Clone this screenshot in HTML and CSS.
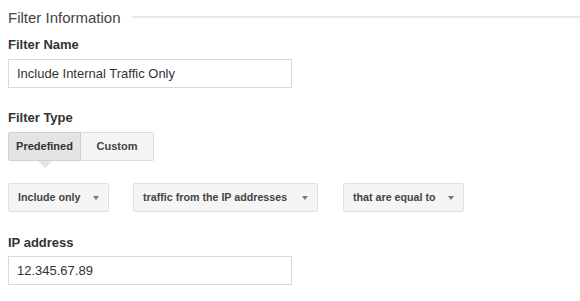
FILE: index.html
```html
<!DOCTYPE html>
<html>
<head>
<meta charset="utf-8">
<link rel="stylesheet" href="styles.css">
</head>
<body>
<div class="page">
  <div class="section-head">
    <span class="section-title">Filter Information</span>
    <span class="section-rule"></span>
  </div>
  <div class="label label-name">Filter Name</div>
  <div class="input">Include Internal Traffic Only</div>

  <div class="label label-type">Filter Type</div>
  <div class="toggle">
    <div class="toggle-btn active">Predefined<span class="caret"></span></div>
    <div class="toggle-btn">Custom</div>
  </div>

  <div class="selects">
    <div class="select s1">Include only<span class="arrow"></span></div>
    <div class="select s2">traffic from the IP addresses<span class="arrow"></span></div>
    <div class="select s3">that are equal to<span class="arrow"></span></div>
  </div>

  <div class="label label-ip">IP address</div>
  <div class="input input-ip">12.345.67.89</div>
</div>
</body>
</html>
```
FILE: styles.css
```css
html, body {
  margin: 0;
  padding: 0;
  background: #fff;
}
body {
  font-family: "Liberation Sans", Arial, sans-serif;
  color: #333;
}
.page {
  padding: 7px 0 0 8px;
}
.section-head {
  display: flex;
  align-items: center;
  height: 20px;
}
.section-title {
  font-size: 15px;
  color: #444;
}
.section-rule {
  flex: 1;
  height: 2px;
  background: #e8e8e8;
  margin-left: 11px;
}
.label {
  font-size: 13px;
  font-weight: bold;
  color: #333;
  line-height: 16px;
}
.label-name { margin-top: 10px; }
.label-type { margin-top: 22px; }
.label-ip { margin-top: 23px; }
.input {
  box-sizing: border-box;
  width: 284px;
  height: 29px;
  margin-top: 6px;
  border: 1px solid #d9d9d9;
  padding: 0 0 0 8px;
  font-size: 13px;
  line-height: 27px;
  color: #333;
}
.input-ip { margin-top: 5px; }
.toggle {
  display: flex;
  margin-top: 6px;
}
.toggle-btn {
  position: relative;
  box-sizing: border-box;
  height: 29px;
  font-size: 11px;
  font-weight: bold;
  color: #444;
  line-height: 27px;
  background: #f5f5f5;
  border: 1px solid #dcdcdc;
  text-align: center;
}
.toggle-btn:first-child {
  width: 73px;
  border-radius: 2px 0 0 2px;
  background: #e4e4e4;
  border-color: #d0d0d0;
  color: #333;
}
.toggle-btn:last-child {
  width: 73px;
  border-left: none;
  border-radius: 0 2px 2px 0;
}
.caret {
  position: absolute;
  left: 29px;
  top: 28px;
  width: 0;
  height: 0;
  border-left: 7px solid transparent;
  border-right: 7px solid transparent;
  border-top: 7px solid #e4e4e4;
}
.selects {
  display: flex;
  margin-top: 22px;
  gap: 24px;
}
.select {
  box-sizing: border-box;
  height: 29px;
  background: #f5f5f5;
  border: 1px solid #e0e0e0;
  border-radius: 2px;
  font-size: 10.7px;
  font-weight: bold;
  color: #444;
  line-height: 27px;
  padding-left: 9px;
  display: flex;
  align-items: center;
}
.s1 { width: 101px; }
.s2 { width: 185px; }
.s3 { width: 121px; margin-left: 1px; }
.arrow {
  margin-left: auto;
  margin-right: 9px;
  width: 0;
  height: 0;
  border-left: 3.5px solid transparent;
  border-right: 3.5px solid transparent;
  border-top: 4px solid #777;
}
```
